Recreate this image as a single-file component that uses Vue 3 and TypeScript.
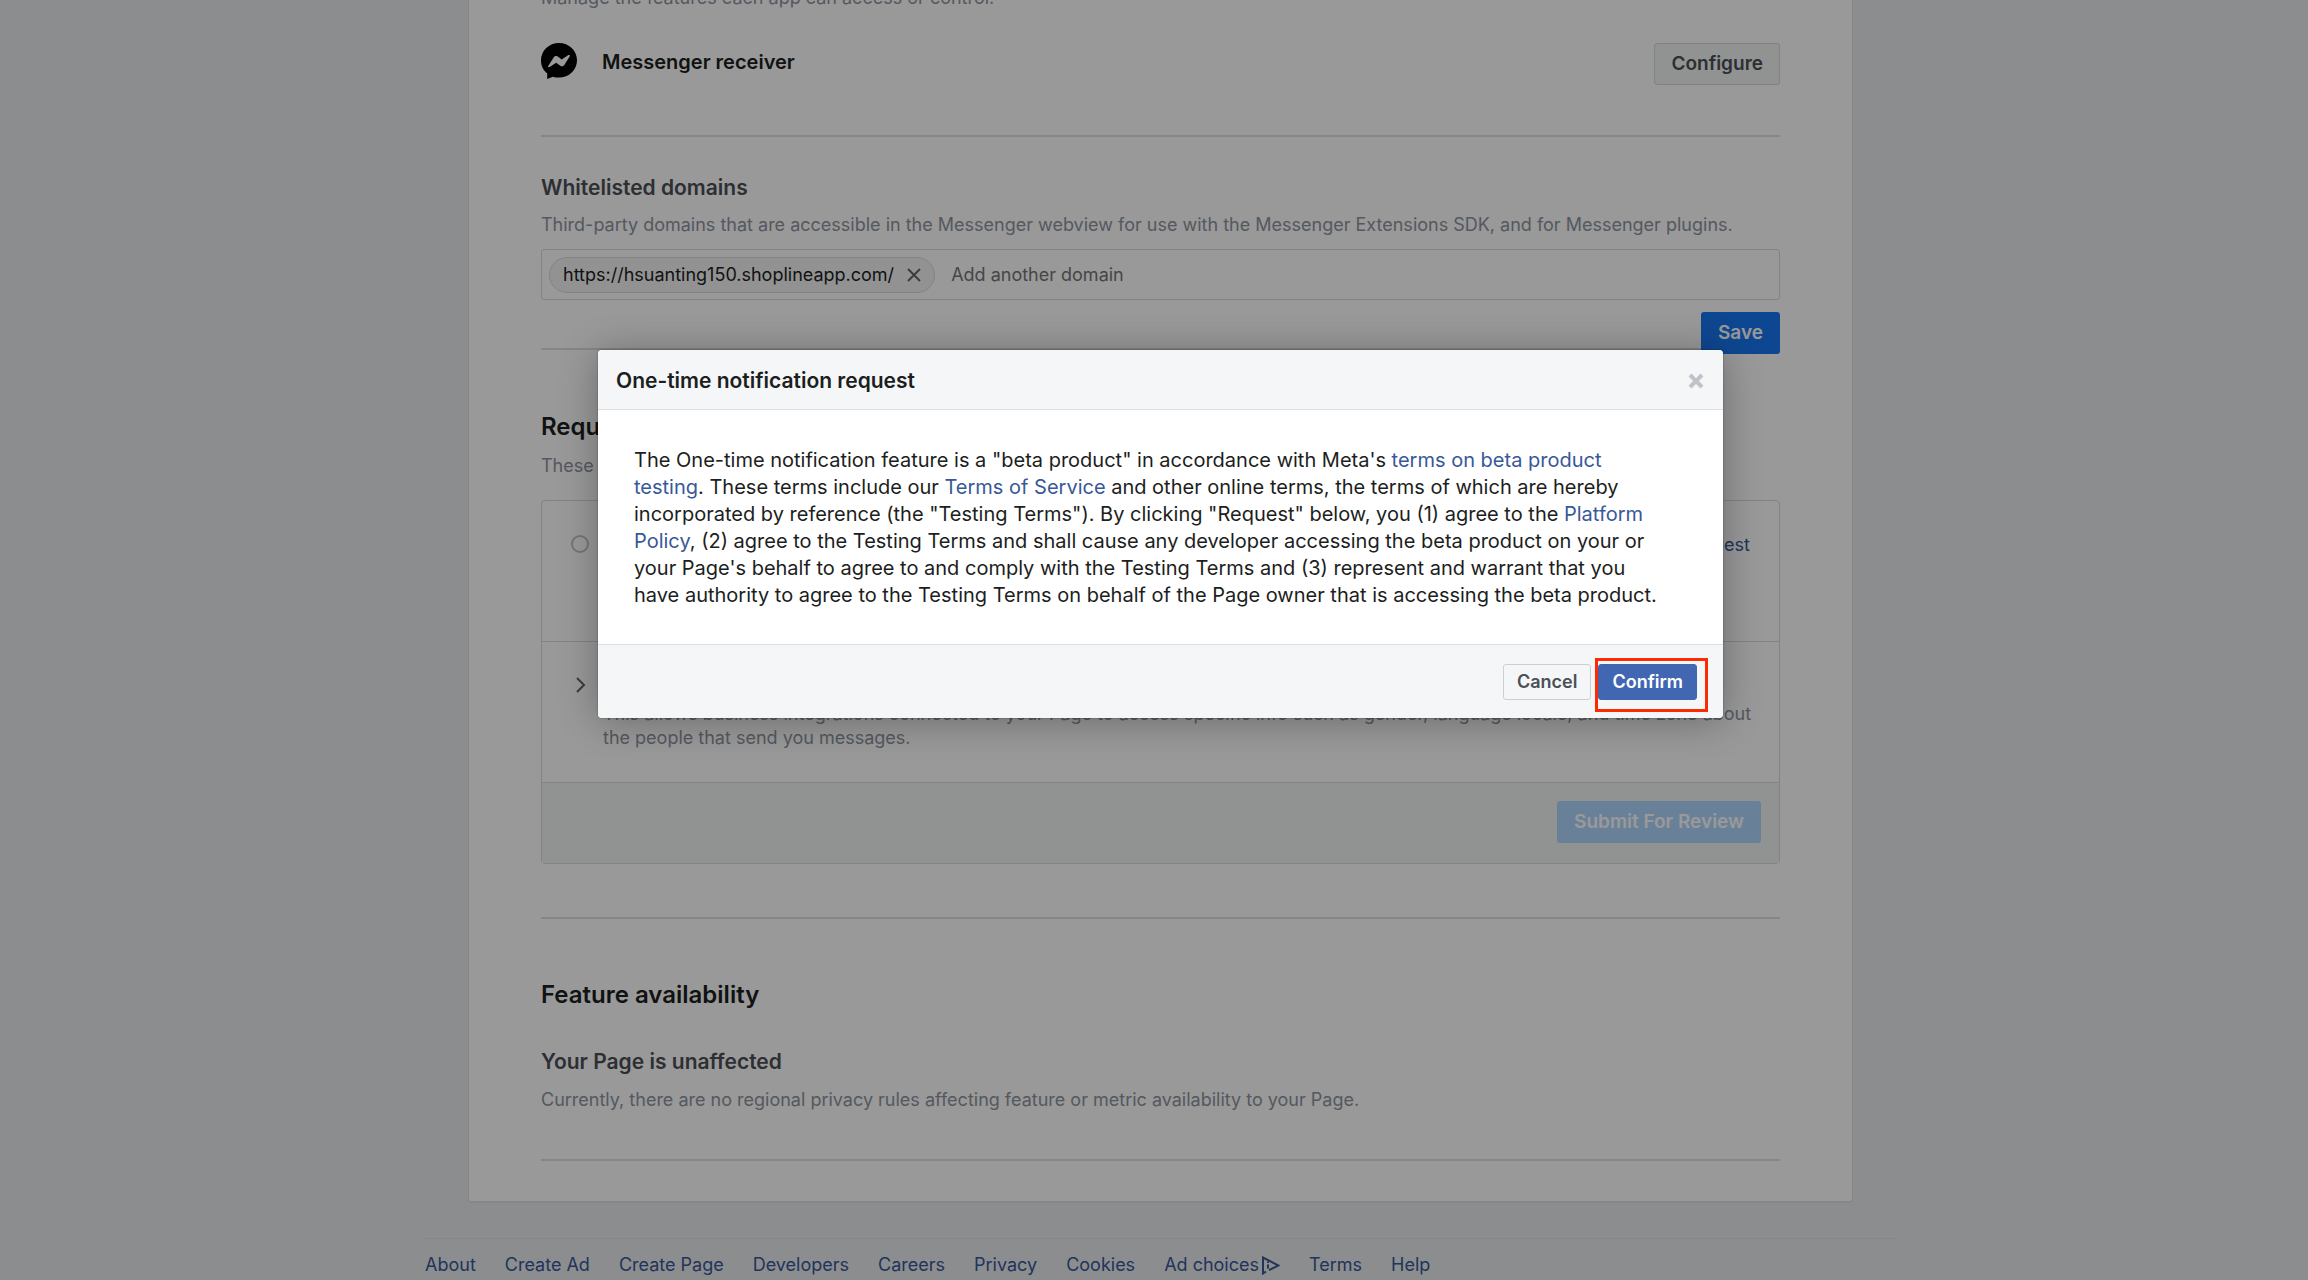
<script setup lang="ts">
import { ref } from 'vue'

interface FooterLink {
  label: string
  adChoices?: boolean
}

const domains = ref<string[]>(['https://hsuanting150.shoplineapp.com/'])
const newDomain = ref('')

const footerLinks: FooterLink[] = [
  { label: 'About' },
  { label: 'Create Ad' },
  { label: 'Create Page' },
  { label: 'Developers' },
  { label: 'Careers' },
  { label: 'Privacy' },
  { label: 'Cookies' },
  { label: 'Ad choices', adChoices: true },
  { label: 'Terms' },
  { label: 'Help' },
]

function removeDomain(domain: string) {
  domains.value = domains.value.filter((d) => d !== domain)
}
</script>

<template>
  <div class="page">
    <main class="card">
      <section class="section receiver">
        <p class="muted lead">Manage the features each app can access or control.</p>
        <div class="app-row">
          <svg class="messenger" viewBox="0 0 36 36" aria-hidden="true">
            <path d="M18 0C8 0 0 7.600 0 17.400c0 5.400 2.300 9.800 6.200 12.900V36l5.600-2.300c2 .6 4 .9 6.200.9 10 0 18-7.500 18-17.300S28 0 18 0z" fill="#000" />
            <path d="M7.200 22.900l5.600-8.700c.9-1.400 2.700-1.700 4-.8l3.900 3 6.700-4.300c.9-.6 2 .3 1.400 1.200l-5.500 8.600c-.9 1.400-2.700 1.700-4 .8l-4.100-3-6.600 4.400c-.9.600-2-.300-1.400-1.200z" fill="#fff" />
          </svg>
          <h3 class="app-name">Messenger receiver</h3>
          <button type="button" class="btn btn-light">Configure</button>
        </div>
      </section>

      <section class="section domains">
        <h3 class="subtitle">Whitelisted domains</h3>
        <p class="muted">Third-party domains that are accessible in the Messenger webview for use with the Messenger Extensions SDK, and for Messenger plugins.</p>
        <div class="token-field">
          <span v-for="domain in domains" :key="domain" class="token">
            {{ domain }}
            <button type="button" class="token-remove" :aria-label="`Remove ${domain}`" @click="removeDomain(domain)">
              <svg viewBox="0 0 14 14" aria-hidden="true"><path d="M1 1l12 12M13 1L1 13" /></svg>
            </button>
          </span>
          <input v-model="newDomain" type="text" class="token-input" placeholder="Add another domain" aria-label="Add another domain" />
        </div>
        <div class="save-row">
          <button type="button" class="btn btn-primary">Save</button>
        </div>
      </section>

      <section class="section requests">
        <h2 class="title">Requested features</h2>
        <p class="muted">These features require approval.</p>
        <div class="feature-box">
          <div class="feature">
            <input id="otn" type="radio" class="radio" />
            <label for="otn" class="feature-text">One-time notification</label>
            <a href="#" class="request-link">Request</a>
          </div>
          <div class="feature">
            <svg class="chevron" viewBox="0 0 18 18" aria-hidden="true"><path d="M6 2l7 7-7 7" /></svg>
            <div class="feature-text">
              <h4 class="feature-name">Page user info</h4>
              <p class="muted">This allows business integrations connected to your Page to access specific info such as gender, language locale, and time zone about the people that send you messages.</p>
            </div>
          </div>
          <div class="feature-actions">
            <button type="button" class="btn btn-disabled" disabled>Submit For Review</button>
          </div>
        </div>
      </section>

      <section class="section availability">
        <h2 class="title">Feature availability</h2>
        <h3 class="subtitle">Your Page is unaffected</h3>
        <p class="muted">Currently, there are no regional privacy rules affecting feature or metric availability to your Page.</p>
      </section>
    </main>

    <footer class="footer">
      <a v-for="link in footerLinks" :key="link.label" href="#" class="footer-link">
        {{ link.label }}<svg v-if="link.adChoices" class="ad-icon" viewBox="0 0 19 19" aria-hidden="true">
          <path d="M5 15.500L2 17.500V1.500L17.500 9.500 8 14.200" />
          <path d="M7 8.500v4M7 5.500v1.500" />
        </svg>
      </a>
    </footer>

    <div class="overlay">
      <div class="modal" role="dialog" aria-modal="true" aria-labelledby="modal-title">
        <header class="modal-header">
          <h2 id="modal-title" class="modal-title">One-time notification request</h2>
          <button type="button" class="modal-close" aria-label="Close">
            <svg viewBox="0 0 16 16" aria-hidden="true"><path d="M2 2l12 12M14 2L2 14" /></svg>
          </button>
        </header>
        <p class="modal-body">
          The One-time notification feature is a "beta product" in accordance with Meta's
          <a href="#">terms on beta product testing</a>. These terms include our
          <a href="#">Terms of Service</a> and other online terms, the terms of which are hereby
          incorporated by reference (the "Testing Terms"). By clicking "Request" below, you (1) agree to the
          <a href="#">Platform Policy</a>, (2) agree to the Testing Terms and shall cause any developer
          accessing the beta product on your or your Page's behalf to agree to and comply with the Testing
          Terms and (3) represent and warrant that you have authority to agree to the Testing Terms on behalf
          of the Page owner that is accessing the beta product.
        </p>
        <footer class="modal-footer">
          <button type="button" class="modal-btn">Cancel</button>
          <span class="highlight">
            <button type="button" class="modal-btn modal-btn-confirm">Confirm</button>
          </span>
        </footer>
      </div>
    </div>
  </div>
</template>

<style>
body {
  background: #e9ebee;
}
</style>

<style scoped>
.page {
  position: relative;
  box-sizing: border-box;
  min-height: 100vh;
  padding-left: 13px;
  overflow: hidden;
  font-family: Inter, "Liberation Sans", sans-serif;
  font-size: 18px;
  line-height: 24px;
  color: #1c1e21;
}

h2, h3, h4, p {
  margin: 0;
}

a {
  color: #385898;
  text-decoration: none;
}

button, input {
  font: inherit;
}

.card {
  box-sizing: border-box;
  max-width: 1385px;
  margin: 0 auto;
  padding: 0 72px 40px;
  background: #fff;
  border: 1px solid #dddfe2;
  border-top: 0;
  border-bottom-width: 2px;
  border-radius: 0 0 4px 4px;
}

.section {
  border-bottom: 2px solid #dfdfdf;
}

.muted {
  color: #8d949e;
}

.title {
  font-size: 24px;
  line-height: 30px;
  font-weight: 600;
}

.subtitle {
  font-size: 21px;
  line-height: 27px;
  font-weight: 600;
  color: #4b4f56;
}

.lead {
  margin-top: -14px;
}

.app-row {
  display: flex;
  align-items: flex-start;
  padding: 33px 0 50px;
}

.messenger {
  width: 36px;
  height: 36px;
  margin-right: 25px;
}

.app-name {
  flex: 1;
  font-size: 20px;
  line-height: 38px;
  font-weight: 600;
}

.btn {
  box-sizing: border-box;
  height: 42px;
  padding: 0 16px;
  border: 1px solid transparent;
  border-radius: 3px;
  font-size: 19px;
  font-weight: 600;
}

.btn-light {
  background: #f2f6f4;
  border-color: #d5dbd8;
  color: #4b4f56;
}

.btn-primary {
  background: #1877f2;
  color: #fff;
}

.btn-disabled {
  background: #b0d5ff;
  color: #fff;
}

.domains {
  padding: 37px 0 0;
  height: 174px;
}

.domains .muted {
  margin-top: 12px;
}

.token-field {
  display: flex;
  align-items: center;
  box-sizing: border-box;
  height: 51px;
  margin-top: 12px;
  padding: 0 7px;
  border: 1px solid #dadada;
  border-radius: 3px;
}

.token {
  display: flex;
  align-items: center;
  box-sizing: border-box;
  height: 36px;
  padding: 0 13px;
  background: #f3f3f3;
  border: 1px solid #dadada;
  border-radius: 18px;
}

.token-remove {
  display: flex;
  margin-left: 13px;
  padding: 0;
  background: none;
  border: 0;
}

.token-remove svg {
  width: 14px;
  height: 14px;
  fill: none;
  stroke: #606770;
  stroke-width: 2;
}

.token-input {
  flex: 1;
  padding: 0;
  margin-left: 16px;
  border: 0;
  outline: 0;
  background: none;
}

.token-input::placeholder {
  color: #757575;
  opacity: 1;
}

.save-row {
  display: flex;
  justify-content: flex-end;
  margin-top: 12px;
}

.requests {
  padding: 62px 0 53px;
}

.requests .muted {
  margin-top: 12px;
}

.feature-box {
  margin-top: 22px;
  border: 1px solid #dadada;
  border-radius: 4px;
}

.feature {
  display: flex;
  align-items: flex-start;
  box-sizing: border-box;
  height: 141px;
  padding: 32px 16px 32px 29px;
  border-bottom: 1px solid #dadada;
}

.radio {
  appearance: none;
  box-sizing: border-box;
  width: 18px;
  height: 18px;
  margin: 2px 14px 0 0;
  border: 2px solid #bec3c9;
  border-radius: 50%;
}

.chevron {
  flex: none;
  width: 18px;
  height: 18px;
  margin: 2px 14px 0 0;
  fill: none;
  stroke: #606770;
  stroke-width: 2;
}

.feature-text {
  flex: 1;
}

.feature-name {
  font-size: 18px;
}

.feature .muted {
  margin-top: 4px;
}

.request-link {
  margin-right: 13px;
}

.feature-actions {
  display: flex;
  justify-content: flex-end;
  padding: 18px 18px 20px;
  background: #f2f6f4;
}

.availability {
  padding: 61px 0 47px;
}

.availability .subtitle {
  margin-top: 38px;
}

.availability .muted {
  margin-top: 13px;
}

.footer {
  display: flex;
  gap: 29px;
  box-sizing: border-box;
  max-width: 1471px;
  margin: 35px auto 0;
  padding-top: 14px;
  border-top: 1px solid #dddfe2;
}

.footer-link {
  display: flex;
  align-items: center;
}

.ad-icon {
  width: 19px;
  height: 19px;
  margin-left: 2px;
  fill: none;
  stroke: #385898;
  stroke-width: 2;
}

.overlay {
  position: absolute;
  inset: 0;
  box-sizing: border-box;
  padding: 350px 0 0 13px;
  background: rgba(0, 0, 0, 0.4);
}

.modal {
  max-width: 1125px;
  margin: 0 auto;
  background: #fff;
  border-radius: 4px;
  box-shadow: 0 3px 39px rgba(0, 0, 0, 0.3), 0 0 2px rgba(0, 0, 0, 0.4);
}

.modal-header {
  display: flex;
  align-items: center;
  justify-content: space-between;
  box-sizing: border-box;
  height: 60px;
  padding: 2px 19px 0 18px;
  background: #f5f6f7;
  border-bottom: 1px solid #dddfe2;
  border-radius: 4px 4px 0 0;
}

.modal-title {
  font-size: 21px;
  line-height: 27px;
  font-weight: 600;
}

.modal-close {
  display: flex;
  padding: 0;
  background: none;
  border: 0;
}

.modal-close svg {
  width: 16px;
  height: 16px;
  fill: none;
  stroke: #bec3c9;
  stroke-width: 4;
}

.modal-body {
  padding: 37px 58px 35px 36px;
  font-size: 20px;
  line-height: 27px;
}

.modal-footer {
  display: flex;
  justify-content: flex-end;
  align-items: flex-start;
  box-sizing: border-box;
  height: 74px;
  padding: 13px 15px;
  background: #f5f6f7;
  border-top: 1px solid #dadde1;
  border-radius: 0 0 4px 4px;
}

.modal-btn {
  height: 36px;
  padding: 0 13px;
  background: #f5f6f7;
  border: 1px solid #ccd0d5;
  border-radius: 3px;
  color: #4b4f56;
  font-weight: 600;
}

.modal-btn-confirm {
  background: #4267b2;
  border-color: #4267b2;
  color: #fff;
}

.modal-footer > .modal-btn {
  margin: 6px 4px 0 0;
}

.highlight {
  box-sizing: border-box;
  height: 54px;
  padding: 3px 8px 3px 0;
  border: 3px solid #fc2b03;
}
</style>
